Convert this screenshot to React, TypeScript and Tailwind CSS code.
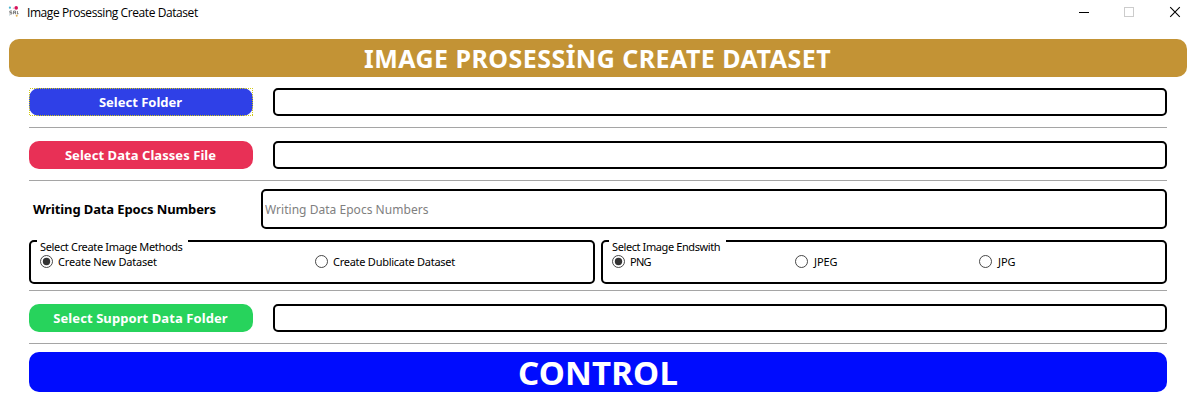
import type { ReactNode } from "react";

function AppIcon() {
  return (
    <svg width="12" height="12" viewBox="0 0 12 12" className="mb-[2px] shrink-0">
      <circle cx="1.9" cy="1.7" r="1.1" fill="#4bb3cf" />
      <circle cx="8.2" cy="1.9" r="1.8" fill="#d8125c" />
      <circle cx="5.4" cy="2.2" r=".6" fill="#bbb" />
      <path d="M4 5H1.8v1.5h2v1.5H1.4M5.5 8.2V5h2v3.2M5.5 6.7h2M9.4 8.2V5M9 7.7h1.6" fill="none" stroke="#777" strokeWidth=".9" />
      <circle cx="8.7" cy="9.7" r="1" fill="#e6b04c" />
      <circle cx="1.6" cy="9.3" r=".5" fill="#b9dce2" />
    </svg>
  );
}

function TitleBar() {
  return (
    <div className="flex h-[39px] items-start pl-2">
      <div className="flex h-[26px] items-center gap-[7px]">
        <AppIcon />
        <span className="font-['Open_Sans',sans-serif] text-[12px] leading-none tracking-[-0.42px] whitespace-nowrap">
          Image Prosessing Create Dataset
        </span>
      </div>
      <svg width="104" height="12" viewBox="0 0 104 12" className="mt-[6px] mr-[15px] ml-auto" shapeRendering="crispEdges">
        <path d="M2 6.5h10" stroke="#000" />
        <rect x="47.5" y="1.5" width="9" height="9" fill="none" stroke="#ccc" />
        <path d="M93.2 1.2l9.6 9.6M102.8 1.2l-9.6 9.6" stroke="#000" strokeWidth="1.1" shapeRendering="auto" />
      </svg>
    </div>
  );
}

function Line() {
  return <hr className="h-px border-0 bg-[#a5a5a5]" />;
}

function FileRow({ label, color, spacing, focused = false }: { label: string; color: string; spacing: string; focused?: boolean }) {
  return (
    <div className="flex h-7 gap-5">
      <button className={`relative h-7 w-[224px] rounded-[10px] pr-px text-[13px] leading-none font-bold text-white ${color} ${spacing}`}>
        {label}
        {focused && (
          <svg width="224" height="28" className="absolute inset-0" shapeRendering="crispEdges">
            <rect x=".5" y=".5" width="223" height="27" fill="none" stroke="#d0c817" strokeDasharray="1 1" />
          </svg>
        )}
      </button>
      <input className="h-7 min-w-0 flex-1 rounded-[5px] border-2 border-black bg-white px-1 outline-none" />
    </div>
  );
}

function Radio({ label, checked = false, width, spacing }: { label: string; checked?: boolean; width: string; spacing: string }) {
  return (
    <label className={`flex h-[13px] items-center gap-[5px] ${width}`}>
      <svg width="13" height="13" viewBox="0 0 13 13" className="shrink-0">
        <circle cx="6.5" cy="6.5" r="6" fill="#fff" stroke="#333" strokeWidth=".9" />
        {checked && <circle cx="6.5" cy="6.5" r="3.7" fill="#333" />}
      </svg>
      <span className={`text-[11px] leading-[13px] whitespace-nowrap ${spacing}`}>{label}</span>
    </label>
  );
}

function Group({ title, width, legend, children }: { title: string; width: string; legend: string; children: ReactNode }) {
  return (
    <section className={`h-11 rounded-[5px] border-2 border-black pl-[6px] ${width}`}>
      <h2 className={`-mt-[2px] h-[15px] bg-white pl-[3px] text-[11px] leading-[14px] font-normal whitespace-nowrap ${legend}`}>{title}</h2>
      <div className="flex pl-[3px]">{children}</div>
    </section>
  );
}

export default function App() {
  return (
    <main className="h-[406px] w-[1196px] overflow-hidden bg-white font-['Noto_Sans',sans-serif] text-black">
      <TitleBar />
      <h1 className="mx-[9px] flex h-[38px] items-center justify-center rounded-[10px] bg-[#c39335] pt-px pr-px text-[25px] leading-none font-bold tracking-[0.46px] text-white">
        IMAGE PROSESSİNG CREATE DATASET
      </h1>
      <div className="mx-[29px] flex flex-col pt-[11px]">
        <FileRow label="Select Folder" color="bg-[#2f40e7]" spacing="tracking-normal" focused />
        <div className="pt-[11px] pb-[13px]"><Line /></div>
        <FileRow label="Select Data Classes File" color="bg-[#e83056]" spacing="tracking-[0.06px]" />
        <div className="pt-[11px] pb-2"><Line /></div>
        <div className="flex h-10 items-center">
          <span className="w-[232px] pl-1 text-[13px] leading-none font-bold tracking-[-0.12px]">Writing Data Epocs Numbers</span>
          <input
            placeholder="Writing Data Epocs Numbers"
            className="h-10 min-w-0 flex-1 rounded-[5px] border-2 border-black bg-white px-[2px] text-[12px] tracking-[0.03px] outline-none placeholder:text-[#808080]"
          />
        </div>
        <div className="mt-[11px] flex gap-[6px]">
          <Group title="Select Create Image Methods" width="w-[566px]" legend="w-[151px] tracking-[-0.34px]">
            <Radio label="Create New Dataset" checked width="w-[275px]" spacing="tracking-[-0.19px]" />
            <Radio label="Create Dublicate Dataset" width="w-[200px]" spacing="tracking-[-0.26px]" />
          </Group>
          <Group title="Select Image Endswith" width="w-[566px]" legend="w-[117px] tracking-[-0.4px]">
            <Radio label="PNG" checked width="w-[183px]" spacing="tracking-[-0.7px]" />
            <Radio label="JPEG" width="w-[184px]" spacing="pl-px tracking-[-0.1px]" />
            <Radio label="JPG" width="w-[100px]" spacing="pl-px tracking-[-0.1px]" />
          </Group>
        </div>
        <div className="pt-[6px] pb-[13px]"><Line /></div>
        <FileRow label="Select Support Data Folder" color="bg-[#27d35c]" spacing="tracking-[0.08px]" />
        <div className="pt-[11px] pb-2"><Line /></div>
        <button className="flex h-10 items-center justify-center rounded-[10px] bg-[#000cfe] pt-px text-[33px] leading-none font-bold tracking-[0.2px] text-white">
          CONTROL
        </button>
      </div>
    </main>
  );
}
